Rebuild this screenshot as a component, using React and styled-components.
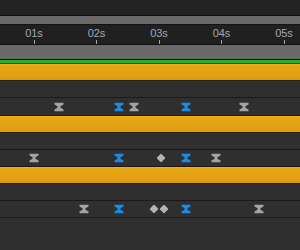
import React from 'react';
import styled, { createGlobalStyle } from 'styled-components';

const Global = createGlobalStyle`
  html, body {
    margin: 0;
    padding: 0;
    background: #2e2e2e;
    overflow: hidden;
  }
`;

const Timeline = styled.div`
  width: 300px;
  height: 250px;
  display: flex;
  flex-direction: column;
  background: #2e2e2e;
  font-family: "Liberation Sans", Arial, sans-serif;
  overflow: hidden;
`;

const TopSpace = styled.div`
  height: 15px;
  background: #232323;
  border-bottom: 1px solid #121212;
`;

const GreyBar = styled.div`
  height: ${p => p.h}px;
  background: #6a6a6a;
  border-bottom: 1px solid #141414;
`;

const Ruler = styled.div`
  position: relative;
  height: 19px;
  background: #202020;
  border-bottom: 1px solid #111;
`;

const Tick = styled.div`
  position: absolute;
  top: 0;
  width: 30px;
  margin-left: -15px;
  display: flex;
  flex-direction: column;
  align-items: center;

  span {
    font-size: 11px;
    line-height: 11px;
    margin-top: 3px;
    color: #a0a9b2;
  }

  i {
    display: block;
    width: 1px;
    height: 4px;
    margin-top: 1px;
    background: #a8a8a8;
  }
`;

const WorkArea = styled.div`
  height: 3px;
  background: #27b427;
  border-bottom: 1px solid #1b5e1b;
`;

const LayerBar = styled.div`
  height: ${p => p.h}px;
  background: linear-gradient(#f0b11c 0, #e6a515 2px, #e3a213 70%, #d89a10 100%);
  border-bottom: 1px solid #2a1f08;
`;

const Row = styled.div`
  position: relative;
  height: ${p => p.h}px;
  background: #2f2f2f;
  border-bottom: 1px solid #1a1a1a;
`;

const Rest = styled.div`
  flex: 1;
  background: #2f2f2f;
`;

const Key = styled.svg`
  position: absolute;
  top: 50%;
  left: ${p => p.x}px;
  transform: translate(-50%, -50%);
`;

const ticks = ['01s', '02s', '03s', '04s', '05s'];
const tickX = [34, 96.5, 159, 221.5, 284];

const Hourglass = ({ x, blue }) => (
  <Key x={x} width="10" height="9" viewBox="0 0 10 9">
    <path
      d="M0.5 0 H9.5 V2 L6.5 3.8 V5.2 L9.5 7 V9 H0.5 V7 L3.5 5.2 V3.8 L0.5 2 Z"
      fill={blue ? '#1a8be0' : '#a3a3a3'}
    />
  </Key>
);

const Diamond = ({ x }) => (
  <Key x={x} width="9" height="9" viewBox="0 0 9 9">
    <path d="M4.5 0 L9 4.5 L4.5 9 L0 4.5 Z" fill="#b4b4b4" />
  </Key>
);

const layers = [
  {
    h: 17,
    keys: [
      { t: 'g', x: 59 }, { t: 'b', x: 119 }, { t: 'g', x: 134 },
      { t: 'b', x: 186 }, { t: 'g', x: 244 },
    ],
  },
  {
    h: 16,
    keys: [
      { t: 'g', x: 34 }, { t: 'b', x: 119 }, { t: 'd', x: 161 },
      { t: 'b', x: 186 }, { t: 'g', x: 216 },
    ],
  },
  {
    h: 16,
    keys: [
      { t: 'g', x: 84 }, { t: 'b', x: 119 }, { t: 'd', x: 154 }, { t: 'd', x: 164 },
      { t: 'b', x: 186 }, { t: 'g', x: 259 },
    ],
  },
];

export default function App() {
  return (
    <Timeline>
      <Global />
      <TopSpace />
      <GreyBar h={8} />
      <Ruler>
        {ticks.map((label, i) => (
          <Tick key={label} style={{ left: tickX[i] }}>
            <span>{label}</span>
            <i />
          </Tick>
        ))}
      </Ruler>
      <GreyBar h={14} />
      <WorkArea />
      {layers.map((layer, i) => (
        <React.Fragment key={i}>
          <LayerBar h={16} />
          <Row h={16} />
          <Row h={layer.h}>
            {layer.keys.map((k, j) =>
              k.t === 'd'
                ? <Diamond key={j} x={k.x} />
                : <Hourglass key={j} x={k.x} blue={k.t === 'b'} />
            )}
          </Row>
        </React.Fragment>
      ))}
      <Rest />
    </Timeline>
  );
}
